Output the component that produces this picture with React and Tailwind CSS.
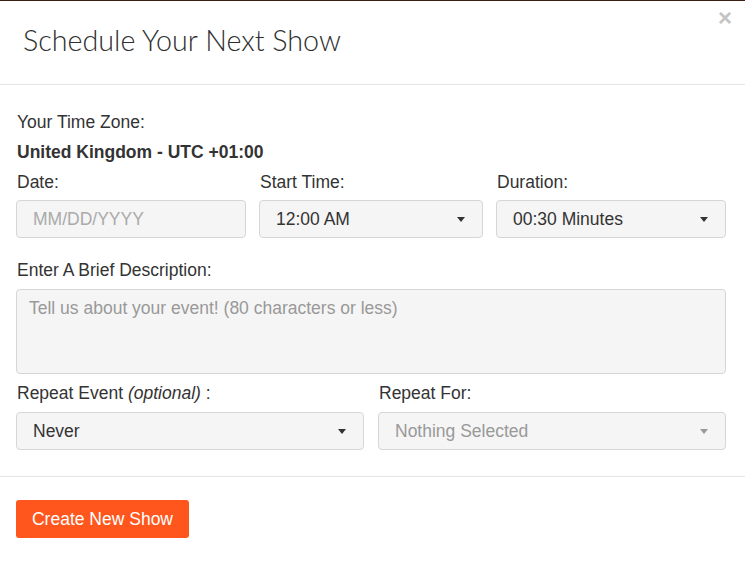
import React from "react";

function Caret({ muted }) {
  return (
    <svg width="10" height="5" viewBox="0 0 10 5" className="shrink-0">
      <path d="M1 0 L9 0 L5 5 Z" fill={muted ? "#999999" : "#333333"} />
    </svg>
  );
}

function Select({ value, muted }) {
  return (
    <div className="flex h-[38px] items-center justify-between rounded-[4px] border border-[#d6d6d6] bg-[#f5f5f5] pl-4 pr-[16px]">
      <span className={muted ? "text-[#999999]" : "text-[#333333]"}>{value}</span>
      <Caret muted={muted} />
    </div>
  );
}

export default function App() {
  return (
    <div
      className="min-h-[564px] w-[745px] bg-white text-[17.5px] text-[#333333]"
      style={{ fontFamily: '"Liberation Sans", Arial, sans-serif' }}
    >
      <div className="h-px bg-[#3d1f12]" />
      <div className="relative flex h-[84px] items-center border-b border-[#e5e5e5] pb-[4px] pl-[23px]">
        <h1
          className="text-[28.7px] font-light leading-none text-[#2e2e2e]"
          style={{ fontFamily: 'Lato, "Open Sans", sans-serif' }}
        >
          Schedule Your Next Show
        </h1>
        <span className="absolute right-[13px] top-[5px] text-[24px] font-bold leading-none text-[#c4c4c4]">
          ×
        </span>
      </div>

      <div className="pb-[26px] pl-4 pr-[19px] pt-[22px]">
        <div className="flex h-[30px] items-center pl-px">Your Time Zone:</div>
        <div className="flex h-[30px] items-center pl-px font-bold">United Kingdom - UTC +01:00</div>

        <div className="grid grid-cols-[230px_224px_230px] gap-x-[13px]">
          <div>
            <div className="flex h-[30px] items-center pl-px">Date:</div>
            <div className="mt-[3px] flex h-[38px] items-center rounded-[4px] border border-[#d6d6d6] bg-[#f5f5f5] pl-4 text-[#aaaaaa]">
              MM/DD/YYYY
            </div>
          </div>
          <div>
            <div className="flex h-[30px] items-center pl-px">Start Time:</div>
            <div className="mt-[3px]">
              <Select value="12:00 AM" />
            </div>
          </div>
          <div>
            <div className="flex h-[30px] items-center pl-px">Duration:</div>
            <div className="mt-[3px]">
              <Select value="00:30 Minutes" />
            </div>
          </div>
        </div>

        <div className="mt-[17px] flex h-[30px] items-center pl-px">Enter A Brief Description:</div>
        <div className="mt-[4px] h-[85px] rounded-[4px] border border-[#d6d6d6] bg-[#f5f5f5] pl-[12px] pt-[5px] text-[#999999]">
          Tell us about your event! (80 characters or less)
        </div>

        <div className="mt-[4px] grid grid-cols-[348px_348px] gap-x-[14px]">
          <div>
            <div className="flex h-[30px] items-center pl-px">
              Repeat Event&nbsp;<i>(optional)</i>&nbsp;:
            </div>
            <div className="mt-[4px]">
              <Select value="Never" />
            </div>
          </div>
          <div>
            <div className="flex h-[30px] items-center pl-px">Repeat For:</div>
            <div className="mt-[4px]">
              <Select value="Nothing Selected" muted />
            </div>
          </div>
        </div>
      </div>

      <div className="border-t border-[#e5e5e5] px-4 pt-[23px]">
        <button className="flex h-[38px] w-[173px] items-center justify-center rounded-[3px] bg-[#fe561d] text-[17.5px] text-white">
          Create New Show
        </button>
      </div>
    </div>
  );
}
